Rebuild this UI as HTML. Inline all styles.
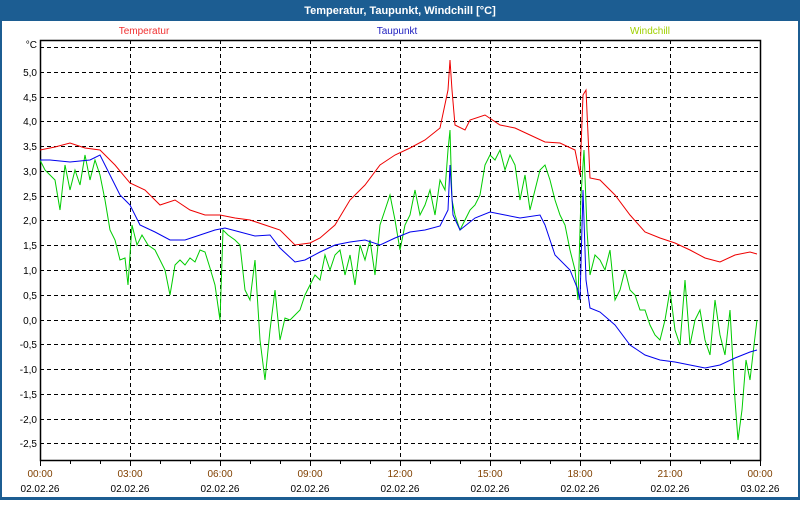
<!DOCTYPE html><html><head><style>body{margin:0;width:800px;height:500px;overflow:hidden;background:#fff;font-family:"Liberation Sans",sans-serif}</style></head><body>
<svg width="800" height="500" xmlns="http://www.w3.org/2000/svg" font-family="Liberation Sans, sans-serif" font-size="10">
<rect x="0" y="0" width="800" height="500" fill="#1c5d92"/>
<rect x="2" y="21" width="796" height="476" fill="#fff"/>
<text x="400" y="14" text-anchor="middle" fill="#fff" font-weight="bold" font-size="11">Temperatur, Taupunkt, Windchill [°C]</text>
<text x="144" y="34" text-anchor="middle" fill="#f03030">Temperatur</text>
<text x="397" y="34" text-anchor="middle" fill="#2020c0">Taupunkt</text>
<text x="650" y="34" text-anchor="middle" fill="#a0d000">Windchill</text>
<g stroke="#000" stroke-dasharray="4,3" stroke-width="1">
<path d="M40 47.5H760M40 72.5H760M40 97.5H760M40 121.5H760M40 146.5H760M40 171.5H760M40 196.5H760M40 220.5H760M40 245.5H760M40 270.5H760M40 295.5H760M40 320.5H760M40 344.5H760M40 369.5H760M40 394.5H760M40 419.5H760M40 443.5H760"/>
<path d="M130.5 40V460M220.5 40V460M310.5 40V460M400.5 40V460M490.5 40V460M580.5 40V460M670.5 40V460"/>
</g>
<rect x="40.5" y="40.5" width="720" height="420" fill="none" stroke="#000" stroke-width="1.5"/>
<g stroke="#000"><path d="M40.5 460v6M70.5 460v4M100.5 460v4M130.5 460v6M160.5 460v4M190.5 460v4M220.5 460v6M250.5 460v4M280.5 460v4M310.5 460v6M340.5 460v4M370.5 460v4M400.5 460v6M430.5 460v4M460.5 460v4M490.5 460v6M520.5 460v4M550.5 460v4M580.5 460v6M610.5 460v4M640.5 460v4M670.5 460v6M700.5 460v4M730.5 460v4M760.5 460v6"/></g>
<g text-anchor="end" fill="#000">
<text x="37" y="48">°C</text><text x="37" y="76">5,0</text><text x="37" y="101">4,5</text><text x="37" y="125">4,0</text><text x="37" y="150">3,5</text><text x="37" y="175">3,0</text><text x="37" y="200">2,5</text><text x="37" y="224">2,0</text><text x="37" y="249">1,5</text><text x="37" y="274">1,0</text><text x="37" y="299">0,5</text><text x="37" y="324">0,0</text><text x="37" y="348">-0,5</text><text x="37" y="373">-1,0</text><text x="37" y="398">-1,5</text><text x="37" y="423">-2,0</text><text x="37" y="447">-2,5</text>
</g>
<g text-anchor="middle">
<g fill="#804000"><text x="40" y="477">00:00</text><text x="130" y="477">03:00</text><text x="220" y="477">06:00</text><text x="310" y="477">09:00</text><text x="400" y="477">12:00</text><text x="490" y="477">15:00</text><text x="580" y="477">18:00</text><text x="670" y="477">21:00</text><text x="760" y="477">00:00</text></g>
<g fill="#000"><text x="40" y="492">02.02.26</text><text x="130" y="492">02.02.26</text><text x="220" y="492">02.02.26</text><text x="310" y="492">02.02.26</text><text x="400" y="492">02.02.26</text><text x="490" y="492">02.02.26</text><text x="580" y="492">02.02.26</text><text x="670" y="492">02.02.26</text><text x="760" y="492">03.02.26</text></g>
</g>
<g fill="none" stroke-width="1">
<polyline stroke="#00cc00" points="40,160 45,170 50,175 55,180 60,210 65,165 70,190 75,170 80,185 85,155 90,180 95,160 100,175 105,200 110,230 115,240 120,260 125,258 128,285 132,225 137,245 142,235 148,245 155,250 160,260 165,270 170,295 175,265 180,260 185,265 190,258 195,262 200,250 205,252 210,268 215,285 220,320 223,230 228,235 235,240 240,245 245,290 250,300 255,260 260,340 265,380 270,330 275,290 280,340 285,318 290,320 295,315 300,310 305,295 310,285 315,275 320,280 325,255 330,270 335,255 340,250 345,275 350,255 355,285 360,245 365,260 370,240 375,275 380,225 385,210 390,195 395,220 400,250 405,225 410,215 415,190 420,215 425,205 430,190 435,215 440,180 445,190 448,150 450,130 452,200 455,215 460,230 465,220 470,210 475,205 480,195 485,165 490,155 495,160 500,150 505,170 510,155 515,165 520,200 525,175 530,210 535,190 540,170 545,165 550,180 555,200 560,215 565,225 570,250 575,270 578,300 581,195 584,150 587,230 590,275 595,255 600,260 605,270 610,250 615,300 620,290 625,270 630,290 635,295 640,310 645,310 650,325 655,335 660,340 665,320 670,290 675,330 680,345 685,280 690,345 695,320 700,310 705,340 710,355 715,300 720,335 725,355 730,310 735,400 738,440 742,410 746,360 750,380 754,345 757,320"/>
<polyline stroke="#0000ee" points="40,160 50,160 70,162 90,160 100,155 110,175 120,195 130,205 140,225 155,232 170,240 185,240 200,235 215,230 225,228 240,232 255,236 270,235 280,248 295,262 305,260 320,252 335,245 350,242 365,240 380,245 395,238 410,232 425,230 440,226 448,210 450,165 453,215 460,230 475,218 490,212 505,215 520,218 540,215 545,225 555,255 570,270 578,290 580,300 583,190 586,280 590,308 600,312 615,325 630,345 645,355 660,360 675,362 690,365 705,368 720,365 735,358 750,352 757,350"/>
<polyline stroke="#ee0000" points="40,150 55,147 70,143 85,148 100,150 115,165 130,183 145,190 160,205 175,200 190,210 205,215 220,215 235,218 250,220 265,225 280,230 295,245 310,243 320,238 335,225 350,200 365,185 380,165 395,155 410,148 425,140 440,128 448,90 450,60 452,90 455,125 465,130 470,120 485,115 500,125 515,128 530,135 545,142 560,143 575,150 580,175 583,95 586,90 590,178 600,180 615,195 630,215 645,232 660,238 675,243 690,250 705,258 720,262 735,255 750,252 757,254"/>
</g>
</svg></body></html>
